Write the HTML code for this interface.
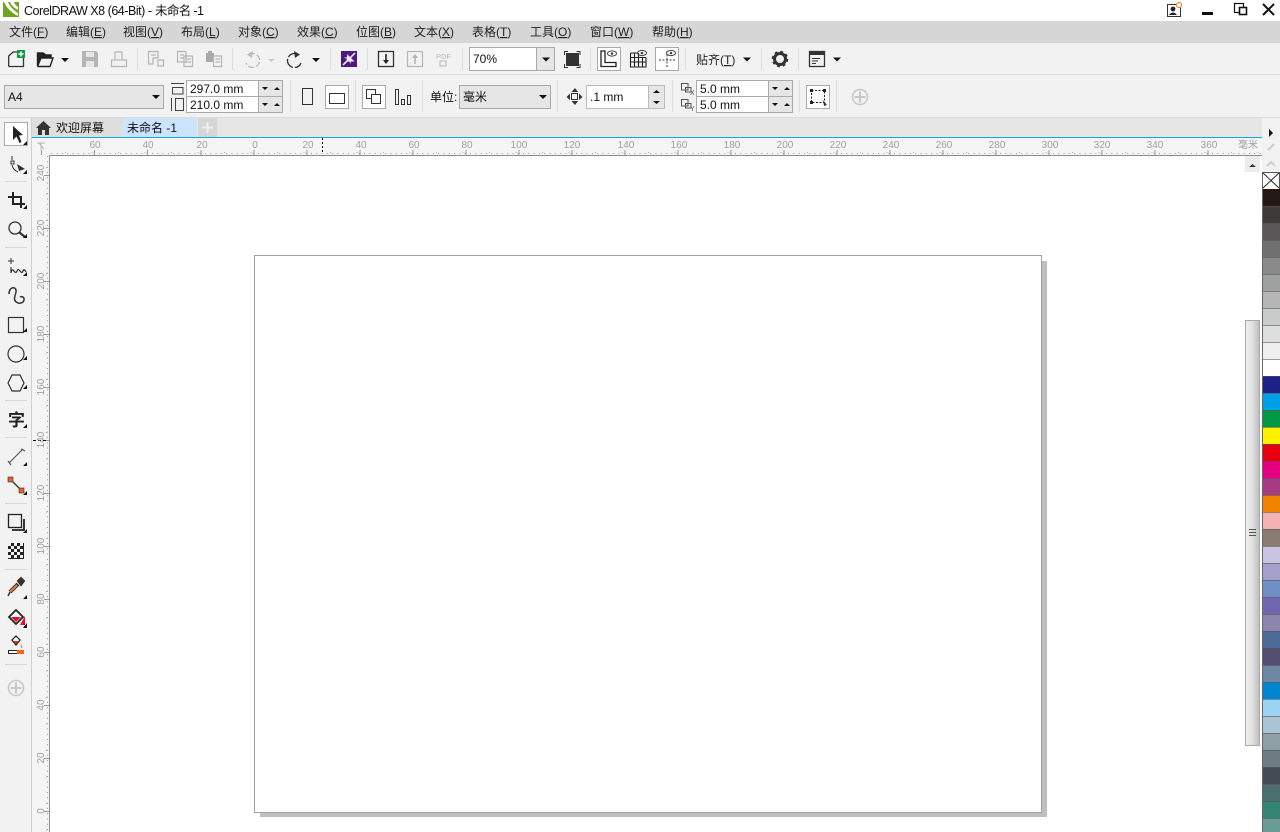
<!DOCTYPE html>
<html><head><meta charset="utf-8"><style>
html,body{margin:0;padding:0;width:1280px;height:832px;overflow:hidden;background:#fff}
svg{display:block;font-family:"Liberation Sans","Noto Sans CJK SC",sans-serif}
.m{font-size:12px;fill:#222}
.t{font-size:12px;fill:#111}
.r{font-size:10px;fill:#a0a0a0;text-anchor:middle}
.i{fill:none;stroke:#333;stroke-width:1.3}
.g{fill:none;stroke:#b5b5b5;stroke-width:1.2}
.s{fill:#dcdcdc}
</style></head><body>
<svg width="1280" height="832" viewBox="0 0 1280 832" xmlns="http://www.w3.org/2000/svg">
<defs><linearGradient id="sb" x1="0" x2="1" y1="0" y2="0"><stop offset="0" stop-color="#f0f0f0"/><stop offset=".5" stop-color="#e0e0e0"/><stop offset="1" stop-color="#bcbcbc"/></linearGradient></defs>
<!-- title bar -->
<rect width="1280" height="21" fill="#fff"/>
<rect x="3" y="2" width="16" height="15" fill="#6fa51c"/>
<path d="M4 2 Q8 11 18 16 L18 13 Q11 9 8 2Z M10 2 Q12 7 18 10 L18 7 Q15 5 14 2Z" fill="#fff"/>
<text x="24" y="15" class="t" style="font-size:12.5px" textLength="128">CorelDRAW X8 (64-Bit) -</text>
<text x="155" y="15" class="t" style="font-size:12.5px" textLength="49">未命名 -1</text>
<rect x="1167.500" y="4.500" width="13" height="12" fill="none" stroke="#333"/>
<circle cx="1173" cy="9" r="2.400" fill="#222"/><path d="M1169 15 Q1173 10 1177 15Z" fill="#222"/>
<circle cx="1179" cy="5" r="2.600" fill="#fff" stroke="#f08030"/>
<rect x="1202" y="12" width="11" height="3" fill="#111"/>
<rect x="1234.500" y="3.500" width="9" height="9" fill="#fff" stroke="#111" stroke-width="1.200"/>
<rect x="1239.500" y="7.500" width="7" height="7" fill="#fff" stroke="#111" stroke-width="1.600"/>
<path d="M1263 4L1274 15M1274 4L1263 15" stroke="#111" stroke-width="2"/>
<!-- menu -->
<rect y="21" width="1280" height="22" fill="#d6d6d6"/>
<g class="m">
<text x="9" y="36">文件(<tspan text-decoration="underline">F</tspan>)</text>
<text x="66" y="36">编辑(<tspan text-decoration="underline">E</tspan>)</text>
<text x="123" y="36">视图(<tspan text-decoration="underline">V</tspan>)</text>
<text x="181" y="36">布局(<tspan text-decoration="underline">L</tspan>)</text>
<text x="238" y="36">对象(<tspan text-decoration="underline">C</tspan>)</text>
<text x="297" y="36">效果(<tspan text-decoration="underline">C</tspan>)</text>
<text x="356" y="36">位图(<tspan text-decoration="underline">B</tspan>)</text>
<text x="414" y="36">文本(<tspan text-decoration="underline">X</tspan>)</text>
<text x="472" y="36">表格(<tspan text-decoration="underline">T</tspan>)</text>
<text x="530" y="36">工具(<tspan text-decoration="underline">O</tspan>)</text>
<text x="590" y="36">窗口(<tspan text-decoration="underline">W</tspan>)</text>
<text x="652" y="36">帮助(<tspan text-decoration="underline">H</tspan>)</text>
</g>
<!-- toolbars bg -->
<rect y="43" width="1280" height="75" fill="#f2f2f2"/>
<rect y="74" width="1280" height="1" fill="#d8d8d8"/>
<rect y="117" width="1280" height="1" fill="#dcdcdc"/>
<!-- row 1 -->
<path d="M8.700 66.500V56L13 52H19M23.500 58V66.500H8.700" class="i"/>
<rect x="17" y="50" width="8" height="8" fill="#119b48"/><path d="M21 51.500v5M18.500 54h5" stroke="#fff" stroke-width="1.400"/>
<path d="M37.500 66.500V53H43L45 55H51V58M37.500 66.500H50L53 58H41L37.500 66.500" fill="none" stroke="#222" stroke-width="1.400"/><path d="M37.500 53H45L46 55H51V58H41L38 66V53Z" fill="#222"/>
<path d="M61 58h8l-4 4z" fill="#111"/>
<path d="M82 51H96L98 53V67H82Z" fill="#b5b5b5"/><rect x="86" y="52" width="8" height="5" fill="#e6e6e6"/><rect x="86" y="61" width="8" height="6" fill="#e6e6e6"/>
<path d="M115 59V52H122V59M111.500 60H126.500V66.500H111.500Z" class="g"/>
<rect class="s" x="137" y="48" width="1" height="22"/>
<path d="M148.500 51.500H158V58H153V64H148.500ZM151 55H156M158 60H163.500V66H158Z" class="g"/>
<path d="M177.500 51.500H186V62H177.500ZM180 55H184M180 58H184M184 56H192.500V66.500H184ZM186 59H191M186 62H191" class="g"/>
<path d="M206 53H214V62H206Z" fill="#aaa"/><rect x="208" y="51" width="4" height="3" fill="#aaa"/><path d="M213.500 56H221.500V66.500H213.500ZM215.500 59H220M215.500 62H220" class="g" style="fill:#f2f2f2"/>
<rect class="s" x="232" y="48" width="1" height="22"/>
<path d="M249 54.500 A7 7 0 1 1 246 63" class="g" stroke-dasharray="6 2"/><path d="M253 51L247 54.500L252 58Z" fill="#bbb"/>
<path d="M268 59h7l-3.500 3z" fill="#c8c8c8"/>
<path d="M298 54.500 A7 7 0 1 0 301 63" class="i" stroke-dasharray="11 2"/><path d="M294 51L300 54.500L295 58Z" fill="#333"/>
<path d="M312 58h8l-4 4z" fill="#111"/>
<rect class="s" x="330" y="48" width="1" height="22"/>
<rect x="341" y="51" width="16" height="16" fill="#4d1a7f"/>
<path d="M355 53L350.500 57.500M343 65L347.500 60.500" stroke="#fff" stroke-width="1.500"/><path d="M347 54V61.500H354.500Z" fill="#fff" opacity=".9"/><path d="M351 64L351 57L344 57Z" fill="#eee" opacity=".6"/>
<rect class="s" x="367" y="48" width="1" height="22"/>
<rect x="378.500" y="51.500" width="15" height="15" class="i"/><path d="M386 54V61" stroke="#222" stroke-width="1.600"/><path d="M383 60H389L386 64Z" fill="#222"/>
<rect x="407.500" y="51.500" width="15" height="15" class="g"/><path d="M415 57V64" stroke="#b5b5b5" stroke-width="1.600"/><path d="M412 58H418L415 54Z" fill="#b5b5b5"/>
<text x="436" y="59" style="font-size:7.500px;fill:#b8b8b8">PDF</text><rect x="440" y="61" width="6" height="5" class="g" style="stroke-width:1"/>
<rect class="s" x="462" y="48" width="1" height="22"/>
<rect x="469.500" y="47.500" width="85" height="23" fill="#fff" stroke="#aaa"/><rect x="537" y="48" width="17" height="22" fill="#e6e6e6"/><rect x="536" y="48" width="1" height="22" fill="#aaa"/>
<text x="473" y="63" class="t">70%</text><path d="M542 57.500h8l-4 4z" fill="#111"/>
<rect x="566" y="53" width="13" height="13" fill="#333"/><path d="M564.500 55V51.500H568M576.500 51.500H580V55M580 64V67.500H576.500M568 67.500H564.500V64" class="i" style="stroke-width:1"/>
<rect class="s" x="590" y="48" width="1" height="22"/>
<rect x="597.500" y="47.500" width="23" height="23" fill="#fff" stroke="#aaa"/>
<path d="M601 51V66.500H616V62.500H605V51Z" fill="none" stroke="#222" stroke-width="1.300"/><ellipse cx="612" cy="53.500" rx="4.500" ry="2.600" fill="none" stroke="#444"/><circle cx="612" cy="53.500" r="1.300" fill="#444"/>
<path d="M630.500 53V67H646V57.500M630.500 57.500H646M630.500 62H646M634.500 53V67M638.500 53V67M642.500 57V67M630.500 53H637" fill="none" stroke="#222" stroke-width="1.100"/><ellipse cx="642" cy="53" rx="4.500" ry="2.600" fill="none" stroke="#444"/><circle cx="642" cy="53" r="1.300" fill="#444"/>
<rect x="655.500" y="47.500" width="23" height="23" fill="#fff" stroke="#aaa"/>
<path d="M659 60H675M667 51V68" stroke="#333" stroke-dasharray="2 1.500"/><ellipse cx="671" cy="53" rx="4.500" ry="2.600" fill="#fff" stroke="#444"/><circle cx="671" cy="53" r="1.300" fill="#444"/>
<rect class="s" x="685" y="48" width="1" height="22"/>
<text x="696" y="64" class="m">贴齐(<tspan text-decoration="underline">T</tspan>)</text>
<path d="M743 57.500h8l-4 4z" fill="#111"/>
<rect class="s" x="761" y="48" width="1" height="22"/>
<circle cx="780" cy="59" r="5.500" fill="none" stroke="#333" stroke-width="3"/><circle cx="780" cy="59" r="7" fill="none" stroke="#333" stroke-width="2.500" stroke-dasharray="2.700 2.800"/>
<rect class="s" x="798" y="48" width="1" height="22"/>
<rect x="809.500" y="51.500" width="15" height="15" class="i"/><rect x="810" y="52" width="14" height="3" fill="#333"/><path d="M812 58.500H820M812 61H818M812 63.500H816" stroke="#333"/>
<path d="M833 57.500h8l-4 4z" fill="#111"/>
<!-- row 2 -->
<rect x="4.500" y="85.500" width="159" height="23" fill="#e6e6e6" stroke="#aaa"/>
<text x="8" y="101" class="t">A4</text><path d="M152 95h8l-4 4z" fill="#111"/>
<path d="M171 83.500H184M172.500 87.500H183V94H172.500Z" fill="none" stroke="#444"/>
<path d="M171.500 98V111M175.500 98.500H183.500V110.500H175.500Z" fill="none" stroke="#444"/>
<rect x="186.500" y="80.500" width="96" height="32" fill="#e6e6e6" stroke="#aaa"/>
<rect x="187" y="81" width="71" height="15" fill="#fff"/><rect x="187" y="97" width="71" height="15" fill="#fff"/><rect x="186" y="96" width="97" height="1" fill="#aaa"/><rect x="258" y="81" width="1" height="31" fill="#aaa"/>
<text x="190" y="93" class="t">297.0 mm</text><text x="190" y="109" class="t">210.0 mm</text>
<path d="M262 87h6l-3 3zM274 90h6l-3-3zM262 103h6l-3 3zM274 106h6l-3-3z" fill="#111"/>
<rect class="s" x="290" y="80" width="1" height="32"/>
<rect x="302.500" y="88.500" width="10" height="16" fill="none" stroke="#333"/>
<rect x="325.500" y="85.500" width="23" height="23" fill="#fff" stroke="#aaa"/><rect x="329.500" y="93.500" width="15" height="10" fill="none" stroke="#333"/>
<rect class="s" x="355" y="80" width="1" height="32"/>
<rect x="362.500" y="85.500" width="23" height="23" fill="#fff" stroke="#aaa"/>
<rect x="366.500" y="89.500" width="9" height="9" fill="none" stroke="#333"/><rect x="371.500" y="94.500" width="9" height="9" fill="#fff" stroke="#333"/>
<rect x="395.500" y="89.500" width="3" height="15" fill="none" stroke="#333"/><rect x="401.500" y="99.500" width="3" height="5" fill="none" stroke="#333"/><rect x="407.500" y="95.500" width="3" height="9" fill="none" stroke="#333"/>
<rect class="s" x="422" y="80" width="1" height="32"/>
<text x="430" y="101" class="t">单位:</text>
<rect x="459.500" y="85.500" width="91" height="23" fill="#e6e6e6" stroke="#aaa"/>
<text x="463" y="101" class="t">毫米</text><path d="M539 95h8l-4 4z" fill="#111"/>
<rect class="s" x="557" y="80" width="1" height="32"/>
<rect x="571.500" y="93.500" width="6" height="6" fill="none" stroke="#333"/><path d="M571.500 92L575 88L578 92ZM571.500 101L575 105L578 101ZM570 93.500L566.500 97L570 100ZM579 93.500L582.500 97L579 100Z" fill="#333"/>
<rect x="586.500" y="85.500" width="78" height="23" fill="#e6e6e6" stroke="#bbb"/><rect x="587" y="86" width="61" height="22" fill="#fff"/><rect x="648" y="86" width="1" height="22" fill="#bbb"/>
<text x="590" y="101" class="t">.1 mm</text>
<path d="M653 93h7l-3.500-3zM653 101h7l-3.500 3z" fill="#111"/>
<rect class="s" x="672" y="80" width="1" height="32"/>
<path d="M681.500 83.500H688V90H681.500ZM685.500 87.500H691V92H685.500Z" fill="none" stroke="#555"/><text x="690" y="95" style="font-size:7px;fill:#555">X</text>
<path d="M681.500 99.500H688V106H681.500ZM685.500 103.500H691V108H685.500Z" fill="none" stroke="#555"/><text x="690" y="111" style="font-size:7px;fill:#555">Y</text>
<rect x="696.500" y="80.500" width="96" height="32" fill="#e6e6e6" stroke="#aaa"/>
<rect x="697" y="81" width="71" height="15" fill="#fff"/><rect x="697" y="97" width="71" height="15" fill="#fff"/><rect x="696" y="96" width="97" height="1" fill="#aaa"/><rect x="768" y="81" width="1" height="31" fill="#aaa"/>
<text x="700" y="93" class="t">5.0 mm</text><text x="700" y="109" class="t">5.0 mm</text>
<path d="M772 87h6l-3 3zM784 90h6l-3-3zM772 103h6l-3 3zM784 106h6l-3-3z" fill="#111"/>
<rect class="s" x="799" y="80" width="1" height="32"/>
<rect x="806.500" y="85.500" width="23" height="23" fill="#fff" stroke="#aaa"/>
<rect x="811.500" y="90.500" width="13" height="12" fill="none" stroke="#222" stroke-dasharray="2 1.500"/><path d="M810 89h3v3h-3zM823 89h3v3h-3zM810 101h3v3h-3z" fill="#222"/><path d="M823 100L827 105L824 106Z" fill="#333"/>
<rect class="s" x="836" y="80" width="1" height="32"/>
<circle cx="860" cy="97" r="7.500" fill="none" stroke="#c8c8c8" stroke-width="1.600"/><path d="M860 91.500V102.500M854.500 97H865.500" stroke="#c8c8c8" stroke-width="2"/>
<!-- left toolbox -->
<rect y="118" width="31" height="714" fill="#f2f2f2"/><rect x="31" y="118" width="1" height="714" fill="#cfcfcf"/>
<rect x="4.500" y="122.500" width="23" height="23" fill="#fff" stroke="#aaa"/>
<path d="M13 126L13 140L16.500 136.500L19.500 143L21.500 142L19 135.500L23 135Z" fill="#222"/><path d="M27 141v4h-4z" fill="#111"/>
<path d="M12 156V160M11 161H14V164H11ZM12 165Q13 170 18 172" fill="none" stroke="#333"/><path d="M17 164L25 169L19 171Z" fill="#333"/><path d="M27 170v4h-4z" fill="#111"/>
<rect x="5" y="181" width="22" height="1" fill="#d8d8d8"/>
<path d="M8 197H21V208M13 192V204H25" fill="none" stroke="#222" stroke-width="2"/><path d="M27 205v4h-4z" fill="#111"/>
<circle cx="15" cy="228" r="6" fill="none" stroke="#333" stroke-width="1.300"/><path d="M19.500 232.500L25 237" stroke="#333" stroke-width="2.200"/><path d="M27 234v4h-4z" fill="#111"/>
<rect x="5" y="247" width="22" height="1" fill="#d8d8d8"/>
<path d="M8 261H14M11 258V264" stroke="#333"/><path d="M11 267V273M11 273Q12 268 14 271T17 271T20 271T23 271T26 272" fill="none" stroke="#333" stroke-width="1.200"/><path d="M27 272v4h-4z" fill="#111"/>
<path d="M9 294C9 286 17 286 16 292L14.500 298C14 304 23 305 24 300C24.500 297 22 296 20 297" fill="none" stroke="#333" stroke-width="1.500"/>
<rect x="8.500" y="317.500" width="15" height="15" fill="none" stroke="#333" stroke-width="1.200"/><path d="M27 328v4h-4z" fill="#111"/>
<circle cx="16" cy="354" r="8" fill="none" stroke="#333" stroke-width="1.200"/><path d="M27 356v4h-4z" fill="#111"/>
<path d="M12 375H20L24 383L20 391H12L8 383Z" fill="none" stroke="#333" stroke-width="1.200"/><path d="M27 385v4h-4z" fill="#111"/>
<rect x="5" y="400" width="22" height="1" fill="#d8d8d8"/>
<text x="8" y="426" style="font-size:17px;font-weight:bold;fill:#222">字</text><path d="M27 424v4h-4z" fill="#111"/>
<rect x="5" y="437" width="22" height="1" fill="#d8d8d8"/>
<path d="M9 463L23 449M8 461L11 465M21 449L25 451" stroke="#555" stroke-width="1.200"/><path d="M27 462v4h-4z" fill="#111"/>
<path d="M11 480L21 490" stroke="#333" stroke-width="1.300"/><rect x="8" y="477" width="5" height="5" fill="#e8601c" stroke="#333" stroke-width=".6"/><rect x="19" y="488" width="5" height="5" fill="#e8601c" stroke="#333" stroke-width=".6"/><path d="M27 491v4h-4z" fill="#111"/>
<rect x="5" y="503" width="22" height="1" fill="#d8d8d8"/>
<rect x="8.500" y="514.500" width="13" height="13" fill="none" stroke="#222" stroke-width="1.300"/><path d="M24 519V530H12" fill="none" stroke="#222" stroke-width="1.800"/><path d="M27 529v4h-4z" fill="#111"/>
<rect x="8" y="543" width="16" height="16" fill="#222"/><path d="M8 543h3v3h-3zM14 543h3v3h-3zM20 543h3v3h-3zM11 546h3v3h-3zM17 546h3v3h-3zM8 549h3v3h-3zM14 549h3v3h-3zM20 549h3v3h-3zM11 552h3v3h-3zM17 552h3v3h-3zM8 555h3v3h-3zM14 555h3v3h-3zM20 555h3v3h-3z" fill="#f2f2f2"/>
<rect x="5" y="569" width="22" height="1" fill="#d8d8d8"/>
<path d="M10 592L18 584" stroke="#333" stroke-width="4"/><path d="M10 592L17 585" stroke="#e07a30" stroke-width="2.200"/><path d="M18 581L21 578L24 581L21 585Z" fill="#333" stroke="#333" stroke-width="2"/><path d="M8 596L10 592" stroke="#333" stroke-width="1.500"/><path d="M27 595v4h-4z" fill="#111"/>
<path d="M9 617L16 610L23 617L16 624Z" fill="#fff" stroke="#222" stroke-width="1.800"/><path d="M11 617H21L16 622Z" fill="#e0102a"/><path d="M25 616V625H20Z" fill="#e0102a"/><path d="M27 623v5h-4z" fill="#111"/>
<path d="M12 640L16 636L20 640L16 645Z" fill="#fff" stroke="#222" stroke-width="1.300"/><path d="M13 641H19L16 644Z" fill="#e0301a"/>
<rect x="8.500" y="650.500" width="15" height="3" fill="#fff" stroke="#222"/><rect x="17" y="650" width="7" height="4" fill="#ee6a1a"/><path d="M21 645L22 648" stroke="#ee6a1a"/>
<rect x="5" y="664" width="22" height="1" fill="#d8d8d8"/>
<circle cx="16" cy="688" r="7.500" fill="none" stroke="#c8c8c8" stroke-width="1.600"/><path d="M16 682.500V693.500M10.500 688H21.500" stroke="#c8c8c8" stroke-width="2"/>
<!-- tabs -->
<rect x="32" y="118" width="1230" height="19" fill="#e6e6e6"/>
<rect x="32" y="118" width="91" height="19" fill="#dedede"/>
<rect x="123" y="118" width="74" height="19" fill="#cce4ff"/>
<rect x="198" y="118" width="19" height="19" fill="#d6d6d6"/>
<path d="M202 127.500H213M207.500 122V133" stroke="#eee" stroke-width="2"/>
<path d="M36 128L43.500 121L51 128H49V135H45V130H42V135H38V128Z" fill="#333"/>
<text x="56" y="132" class="t">欢迎屏幕</text>
<text x="127" y="132" class="t">未命名 -1</text>
<rect x="32" y="137" width="1230" height="1" fill="#1ba1e2"/>
<!-- rulers -->
<rect x="32" y="138" width="1230" height="17" fill="#f5f5f5"/>
<rect x="32" y="138" width="18" height="694" fill="#f5f5f5"/>
<rect x="50" y="155" width="1212" height="1" fill="#8c8c8c"/>
<rect x="49" y="155" width="1" height="677" fill="#8c8c8c"/>
<path d="M37 143H45M39 143L44 149M41 143V150" stroke="#b8b8b8" fill="none"/>
<!-- ruler ticks -->
<path d="M50 153.500H1262" stroke="#999" stroke-dasharray="1 4.300" stroke-dashoffset="-1.300"/>
<path d="M50 152.500H1262" stroke="#aaa" stroke-dasharray="1 25.500" stroke-dashoffset="-15"/>
<path d="M41.500 150V155M94.500 150V155M147.500 150V155M201 150V155M254 150V155M307 150V155M360 150V155M413 150V155M466 150V155M519 150V155M572 150V155M625 150V155M678 150V155M731 150V155M784 150V155M837 150V155M890 150V155M943 150V155M996 150V155M1049 150V155M1102 150V155M1155 150V155M1208 150V155" stroke="#999"/>
<path d="M47.500 156V832" stroke="#999" stroke-dasharray="1 4.300"/>
<path d="M46.500 167V832" stroke="#aaa" stroke-dasharray="1 25.500"/>
<path d="M44 175.500H49M44 228.500H49M44 281.500H49M44 334.500H49M44 387.500H49M44 440.500H49M44 493.500H49M44 546.500H49M44 599.500H49M44 652.500H49M44 705.500H49M44 758.500H49M44 811.500H49" stroke="#999"/>
<path d="M322.500 138V154" stroke="#111" stroke-dasharray="2 2"/>
<path d="M33 440.500H48" stroke="#111" stroke-dasharray="3 2"/>
<g class="r">
<text x="95" y="148">60</text><text x="148" y="148">40</text><text x="202" y="148">20</text><text x="255" y="148">0</text><text x="308" y="148">20</text><text x="361" y="148">40</text><text x="414" y="148">60</text><text x="467" y="148">80</text><text x="519" y="148">100</text><text x="572" y="148">120</text><text x="626" y="148">140</text><text x="679" y="148">160</text><text x="732" y="148">180</text><text x="785" y="148">200</text><text x="838" y="148">220</text><text x="891" y="148">240</text><text x="944" y="148">260</text><text x="997" y="148">280</text><text x="1050" y="148">300</text><text x="1102" y="148">320</text><text x="1155" y="148">340</text><text x="1209" y="148">360</text><text x="1248" y="148">毫米</text>
<text transform="translate(44,173) rotate(-90)">240</text>
<text transform="translate(44,228) rotate(-90)">220</text>
<text transform="translate(44,281) rotate(-90)">200</text>
<text transform="translate(44,334) rotate(-90)">180</text>
<text transform="translate(44,387) rotate(-90)">160</text>
<text transform="translate(44,440) rotate(-90)">140</text>
<text transform="translate(44,493) rotate(-90)">120</text>
<text transform="translate(44,546) rotate(-90)">100</text>
<text transform="translate(44,599) rotate(-90)">80</text>
<text transform="translate(44,652) rotate(-90)">60</text>
<text transform="translate(44,705) rotate(-90)">40</text>
<text transform="translate(44,758) rotate(-90)">20</text>
<text transform="translate(44,811) rotate(-90)">0</text>
</g>
<!-- page -->
<rect x="260" y="261" width="787" height="556" fill="#bfbfbf"/>
<rect x="254.500" y="255.500" width="787" height="557" fill="#fff" stroke="#a0a0a0"/>
<!-- scrollbar -->
<rect x="1245" y="156" width="15" height="16" fill="#ececec"/><path d="M1249 167h7l-3.500-3z" fill="#333"/>
<rect x="1245.500" y="320.500" width="14" height="425" fill="url(#sb)" stroke="#a8a8a8"/>
<path d="M1249 529.500H1256M1249 532.500H1256M1249 535.500H1256" stroke="#555"/>
<!-- palette side -->
<rect x="1262" y="118" width="18" height="54" fill="#f2f2f2"/>
<path d="M1269 129L1273 133L1269 137Z" fill="#111"/>
<path d="M1268 150L1274 144" stroke="#ccc" stroke-width="2"/>
<path d="M1267 166L1271 162L1275 166" fill="none" stroke="#ccc" stroke-width="2"/>
<rect x="1262" y="172" width="18" height="17" fill="#fff"/><path d="M1263 173L1279 188M1279 173L1263 188" stroke="#222"/>
<rect x="1262.500" y="172.500" width="17" height="17" fill="none" stroke="#555"/>
<g>
<rect x="1262" y="189" width="18" height="17" fill="#231815"/>
<rect x="1262" y="206" width="18" height="17" fill="#3e3a39"/>
<rect x="1262" y="223" width="18" height="17" fill="#595757"/>
<rect x="1262" y="240" width="18" height="17" fill="#717071"/>
<rect x="1262" y="257" width="18" height="17" fill="#898989"/>
<rect x="1262" y="274" width="18" height="17" fill="#9fa0a0"/>
<rect x="1262" y="291" width="18" height="17" fill="#b5b5b6"/>
<rect x="1262" y="308" width="18" height="17" fill="#c9caca"/>
<rect x="1262" y="325" width="18" height="17" fill="#dcdddd"/>
<rect x="1262" y="342" width="18" height="17" fill="#efefef"/>
<rect x="1262" y="359" width="18" height="17" fill="#ffffff"/>
<rect x="1262" y="376" width="18" height="17" fill="#1d2088"/>
<rect x="1262" y="393" width="18" height="17" fill="#00a0e9"/>
<rect x="1262" y="410" width="18" height="17" fill="#009944"/>
<rect x="1262" y="427" width="18" height="17" fill="#fff100"/>
<rect x="1262" y="444" width="18" height="17" fill="#e60012"/>
<rect x="1262" y="461" width="18" height="17" fill="#e4007f"/>
<rect x="1262" y="478" width="18" height="17" fill="#a73a85"/>
<rect x="1262" y="495" width="18" height="17" fill="#f08300"/>
<rect x="1262" y="512" width="18" height="17" fill="#f5b2b2"/>
<rect x="1262" y="529" width="18" height="17" fill="#8a7c72"/>
<rect x="1262" y="546" width="18" height="17" fill="#c9c5e0"/>
<rect x="1262" y="563" width="18" height="17" fill="#a4a0cc"/>
<rect x="1262" y="580" width="18" height="17" fill="#6f8fc8"/>
<rect x="1262" y="597" width="18" height="17" fill="#7067ae"/>
<rect x="1262" y="614" width="18" height="17" fill="#8c85ae"/>
<rect x="1262" y="631" width="18" height="17" fill="#4e6a99"/>
<rect x="1262" y="648" width="18" height="17" fill="#544f72"/>
<rect x="1262" y="665" width="18" height="17" fill="#6f86a4"/>
<rect x="1262" y="682" width="18" height="17" fill="#0086d1"/>
<rect x="1262" y="699" width="18" height="17" fill="#9bd3f2"/>
<rect x="1262" y="716" width="18" height="17" fill="#a9c5d5"/>
<rect x="1262" y="733" width="18" height="17" fill="#8e9fa6"/>
<rect x="1262" y="750" width="18" height="17" fill="#6e7b83"/>
<rect x="1262" y="767" width="18" height="17" fill="#434b54"/>
<rect x="1262" y="784" width="18" height="17" fill="#4b6e6f"/>
<rect x="1262" y="801" width="18" height="17" fill="#348571"/>
<rect x="1262" y="818" width="18" height="14" fill="#6b9b95"/>
</g>
<path d="M1262 206.500H1280M1262 223.500H1280M1262 240.500H1280M1262 257.500H1280M1262 274.500H1280M1262 291.500H1280M1262 308.500H1280M1262 325.500H1280M1262 342.500H1280M1262 359.500H1280M1262 376.500H1280M1262 393.500H1280M1262 410.500H1280M1262 427.500H1280M1262 444.500H1280M1262 461.500H1280M1262 478.500H1280M1262 495.500H1280M1262 512.500H1280M1262 529.500H1280M1262 546.500H1280M1262 563.500H1280M1262 580.500H1280M1262 597.500H1280M1262 614.500H1280M1262 631.500H1280M1262 648.500H1280M1262 665.500H1280M1262 682.500H1280M1262 699.500H1280M1262 716.500H1280M1262 733.500H1280M1262 750.500H1280M1262 767.500H1280M1262 784.500H1280M1262 801.500H1280M1262 818.500H1280" stroke="#555" stroke-opacity=".6"/>
<rect x="1262" y="172" width="1" height="660" fill="#666"/>
</svg>
</body></html>
